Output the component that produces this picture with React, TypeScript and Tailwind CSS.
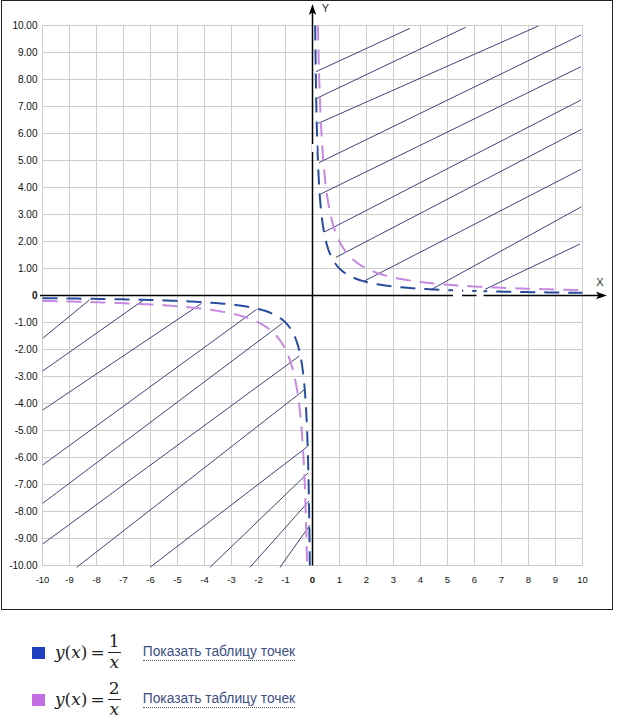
import React from "react";

const X = (u: number) => 312.5 + 27 * u;
const Y = (v: number) => 295.5 - 27 * v;

function curve(k: number, a: number, b: number): string {
  const n = 300;
  const pts: string[] = [];
  const s = a < 0 ? -1 : 1;
  const A = Math.abs(a);
  const B = Math.abs(b);
  for (let i = 0; i <= n; i++) {
    const m = A * Math.pow(B / A, i / n);
    const u = s * m;
    const v = k / u;
    pts.push(`${X(u).toFixed(2)},${Y(v).toFixed(2)}`);
  }
  return "M" + pts.join(" L");
}

const hatchQ1: number[][] = [
  [316, 71.7, 410, 28.3],
  [316.7, 98.3, 465.7, 27.3],
  [318.3, 123.3, 538.3, 26],
  [319, 162.7, 581, 35],
  [320.7, 194, 581, 66.7],
  [325, 231.7, 581, 100],
  [336, 257.3, 581.5, 129.3],
  [365, 280.7, 581, 169.3],
  [431.7, 289.3, 581.5, 206.7],
  [485, 289.3, 580, 244],
];

const hatchQ3: number[][] = [
  [42.7, 338.3, 89.3, 300],
  [42.7, 371, 142.7, 300.7],
  [42.7, 410, 201.7, 303.3],
  [42.7, 465, 256.7, 309.3],
  [42.7, 503.3, 282.3, 323.3],
  [42.7, 544, 299.3, 356],
  [76.7, 567.3, 305, 389.3],
  [150, 567.3, 307.3, 446.7],
  [210, 567.3, 308.3, 472.7],
  [250, 567.3, 309.3, 500.7],
  [280, 567.3, 310, 525],
];

const ticks = Array.from({ length: 21 }, (_, i) => i - 10);

function Chart() {
  return (
    <svg width={610} height={608} viewBox="2 1 610 608" className="block">
      <rect x={2} y={1} width={610} height={608} fill="#ffffff" />
      {ticks.map((t) => (
        <line key={"gv" + t} x1={X(t)} y1={Y(10)} x2={X(t)} y2={Y(-10)} stroke="#cdcdcd" strokeWidth={1} />
      ))}
      {ticks.map((t) => (
        <line key={"gh" + t} x1={X(-10)} y1={Y(t)} x2={X(10)} y2={Y(t)} stroke="#cdcdcd" strokeWidth={1} />
      ))}
      <line x1={40} y1={295.5} x2={599} y2={295.5} stroke="#000" strokeWidth={1.5} />
      <line x1={312.5} y1={565.5} x2={312.5} y2={12} stroke="#000" strokeWidth={1.5} />
      <polygon points="607,295.5 596,291.8 598.5,295.5 596,299.2" fill="#000" />
      <polygon points="312.5,4 308.8,15 312.5,12.5 316.2,15" fill="#000" />
      {hatchQ1.concat(hatchQ3).map((h, i) => (
        <line key={"h" + i} x1={h[0]} y1={h[1]} x2={h[2]} y2={h[3]} stroke="#2c2c6c" strokeWidth={0.9} />
      ))}
      <path d={curve(2, 0.2, 10)} fill="none" stroke="#c688e0" strokeWidth={2} strokeDasharray="15 9" />
      <path d={curve(2, -10, -0.2)} fill="none" stroke="#c688e0" strokeWidth={2} strokeDasharray="15 9" />
      <path d={curve(1, 0.1, 10)} fill="none" stroke="#284c9e" strokeWidth={2} strokeDasharray="15 9" />
      <path d={curve(1, -10, -0.1)} fill="none" stroke="#284c9e" strokeWidth={2} strokeDasharray="15 9" />
      <rect x={311.5} y={144} width={5} height={8} fill="#fff" />
      <rect x={453} y={287} width={9} height={12} fill="#fff" />
      <rect x={476.5} y={288} width={7} height={11} fill="#fff" />
      <g fontFamily="'Liberation Sans', Arial, sans-serif" fill="#111">
        {ticks.map((t) => (
          <text
            key={"yl" + t}
            x={37.5}
            y={Y(t) + 3.6}
            fontSize={10}
            textAnchor="end"
            fontWeight={t === 0 ? 700 : 400}
          >
            {t === 0 ? "0" : t.toFixed(2)}
          </text>
        ))}
        {ticks.map((t) => (
          <text
            key={"xl" + t}
            x={X(t)}
            y={582.5}
            fontSize={9.5}
            textAnchor="middle"
            fontWeight={t === 0 ? 700 : 400}
          >
            {String(t)}
          </text>
        ))}
        <text x={600} y={285.5} fontSize={11} textAnchor="middle" fill="#333">
          X
        </text>
        <text x={325.5} y={11.5} fontSize={11} textAnchor="middle" fill="#333">
          Y
        </text>
      </g>
    </svg>
  );
}

function Row({ color, num }: { color: string; num: string }) {
  return (
    <div className="flex items-center h-[40px]">
      <span className="block w-[13px] h-[12px] mt-[2px]" style={{ backgroundColor: color }} />
      <span className="ml-[10px] flex items-center text-[17px] text-[#222] font-['DejaVu_Serif',serif]">
        <span className="leading-[18px] italic">y</span>
        <span className="leading-[18px]">(</span>
        <span className="leading-[18px] italic">x</span>
        <span className="leading-[18px]">)</span>
        <span className="leading-[18px] mx-[3px]">=</span>
        <span className="flex flex-col items-center">
          <span className="leading-[18px] mb-[2px]">{num}</span>
          <span className="block h-[1px] w-[13px] bg-[#222]" />
          <span className="leading-[18px] italic pb-[2px]">x</span>
        </span>
      </span>
      <span className="ml-[22px] text-[13.8px] leading-[15px] text-[#3d4f82] border-b border-dotted border-[#555] pb-[1px] font-['Liberation_Sans',Arial,sans-serif] cursor-pointer">
        Показать таблицу точек
      </span>
    </div>
  );
}

export default function App() {
  return (
    <div className="w-[617px] h-[723px] bg-white overflow-hidden">
      <div className="ml-[1px] w-[612px] h-[610px] border border-[#222]">
        <Chart />
      </div>
      <div className="mt-[22px] pl-[32px] flex flex-col gap-[7px]">
        <Row color="#1e3fbf" num="1" />
        <Row color="#c26ee0" num="2" />
      </div>
    </div>
  );
}
